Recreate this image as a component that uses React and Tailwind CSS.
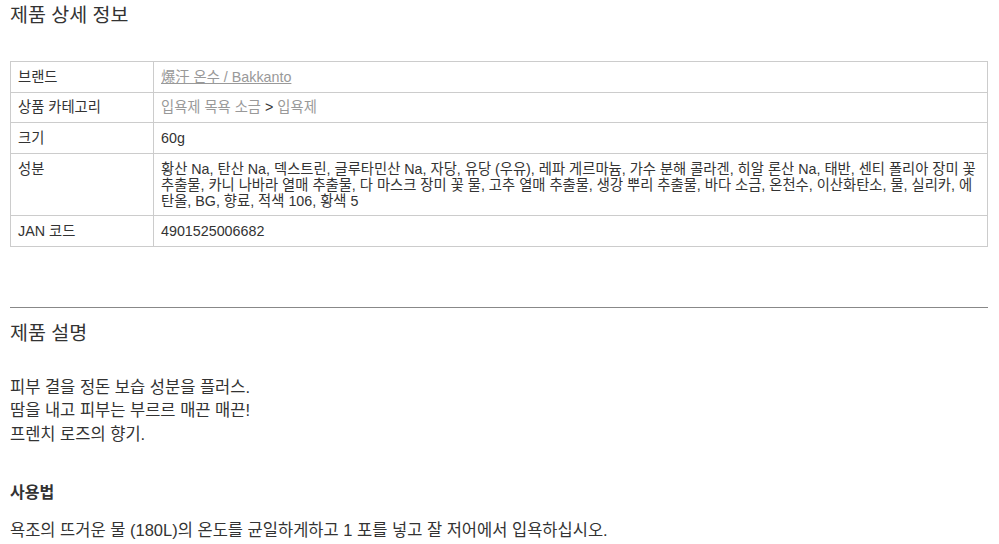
import React from 'react';

const rows = [
    { label: '브랜드', type: 'link', value: '爆汗 온수 / Bakkanto' },
    { label: '상품 카테고리', type: 'crumb', value: ['입욕제 목욕 소금', '입욕제'] },
    { label: '크기', value: '60g' },
    {
        label: '성분',
        value: '황산 Na, 탄산 Na, 덱스트린, 글루타민산 Na, 자당, 유당 (우유), 레파 게르마늄, 가수 분해 콜라겐, 히알 론산 Na, 태반, 센티 폴리아 장미 꽃 추출물, 카니 나바라 열매 추출물, 다 마스크 장미 꽃 물, 고추 열매 추출물, 생강 뿌리 추출물, 바다 소금, 온천수, 이산화탄소, 물, 실리카, 에탄올, BG, 향료, 적색 106, 황색 5',
    },
    { label: 'JAN 코드', value: '4901525006682' },
];

const ProductDetail = () => {
    return (
        <div
            className="min-h-screen bg-white text-[#333] px-[10px] pr-[11px]"
            style={{ fontFamily: '"Liberation Sans", "Noto Sans CJK KR", sans-serif' }}
        >
            <h2 className="text-[19.5px] leading-[30px] font-normal">제품 상세 정보</h2>

            <table className="w-full mt-[31px] border-collapse text-[14.3px] leading-[16px]">
                <tbody>
                    {rows.map((row) => (
                        <tr key={row.label}>
                            <td className="w-[143px] border border-[#cccccc] px-[7px] py-[6.8px] align-top">{row.label}</td>
                            <td className="border border-[#cccccc] px-[7px] py-[6.8px] align-top">
                                {row.type === 'link' ? (
                                    <a href="#" className="text-[#999] underline">{row.value}</a>
                                ) : row.type === 'crumb' ? (
                                    <span className="text-[#999]">
                                        {row.value[0]} <span className="text-[#333]">&gt;</span> {row.value[1]}
                                    </span>
                                ) : (
                                    row.value
                                )}
                            </td>
                        </tr>
                    ))}
                </tbody>
            </table>

            <hr className="mt-[60px] border-0 border-t border-[#888]" />

            <h2 className="mt-[10px] text-[19.5px] leading-[30px] font-normal">제품 설명</h2>

            <div className="mt-[28px] text-[16.5px] leading-[23.5px]">
                <p>피부 결을 정돈 보습 성분을 플러스.</p>
                <p>땀을 내고 피부는 부르르 매끈 매끈!</p>
                <p>프렌치 로즈의 향기.</p>
            </div>

            <h3 className="mt-[35px] text-[16px] leading-[24px] font-bold">사용법</h3>
            <p className="mt-[13px] text-[16.5px] leading-[24px]">
                욕조의 뜨거운 물 (180L)의 온도를 균일하게하고 1 포를 넣고 잘 저어에서 입욕하십시오.
            </p>
        </div>
    );
};

export default ProductDetail;
